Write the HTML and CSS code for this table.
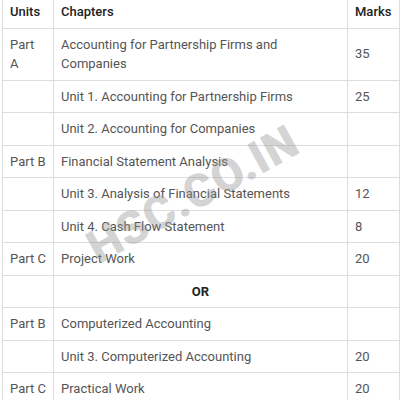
FILE: index.html
```html
<!DOCTYPE html>
<html>
<head>
<meta charset="utf-8">
<link rel="stylesheet" href="styles.css">
</head>
<body>
<div class="wrap">
<table class="marks">
  <colgroup><col class="c1"><col class="c2"><col class="c3"></colgroup>
  <thead>
    <tr><th>Units</th><th>Chapters</th><th>Marks</th></tr>
  </thead>
  <tbody>
    <tr><td>Part<br>A</td><td>Accounting for Partnership Firms and Companies</td><td>35</td></tr>
    <tr><td></td><td>Unit 1. Accounting for Partnership Firms</td><td>25</td></tr>
    <tr><td></td><td>Unit 2. Accounting for Companies</td><td></td></tr>
    <tr><td>Part B</td><td>Financial Statement Analysis</td><td></td></tr>
    <tr><td></td><td>Unit 3. Analysis of Financial Statements</td><td>12</td></tr>
    <tr><td></td><td>Unit 4. Cash Flow Statement</td><td>8</td></tr>
    <tr><td>Part C</td><td>Project Work</td><td>20</td></tr>
    <tr><td></td><td class="or">OR</td><td></td></tr>
    <tr><td>Part B</td><td>Computerized Accounting</td><td></td></tr>
    <tr><td></td><td>Unit 3. Computerized Accounting</td><td>20</td></tr>
    <tr><td>Part C</td><td>Practical Work</td><td>20</td></tr>
  </tbody>
</table>
<div class="watermark">HSC.CO.IN</div>
</div>
</body>
</html>
```
FILE: styles.css
```css
html, body { margin: 0; padding: 0; background: #fff; }
body { font-family: Roboto, "Noto Sans", sans-serif; overflow: hidden; }
.wrap { position: relative; padding-left: 2px; margin-top: -5px; }
.marks {
  border-collapse: collapse;
  width: 398px;
  table-layout: fixed;
  font-size: 13px;
  line-height: 19.5px;
  color: #555;
}
.c1 { width: 51px; }
.c3 { width: 52px; }
.marks th, .marks td {
  border: 1px solid #ddd;
  padding: 6px 7px;
  text-align: left;
  vertical-align: middle;
}
.marks th { color: #222; font-weight: 500; }
.marks td.or { text-align: center; font-weight: 700; color: #222; }
.watermark {
  position: absolute;
  left: 76px;
  top: 172px;
  font-family: Roboto, sans-serif;
  font-weight: 900;
  font-size: 46px;
  letter-spacing: 1px;
  color: rgba(150,150,150,0.42);
  transform: rotate(-29deg);
  transform-origin: center;
  pointer-events: none;
}
```
